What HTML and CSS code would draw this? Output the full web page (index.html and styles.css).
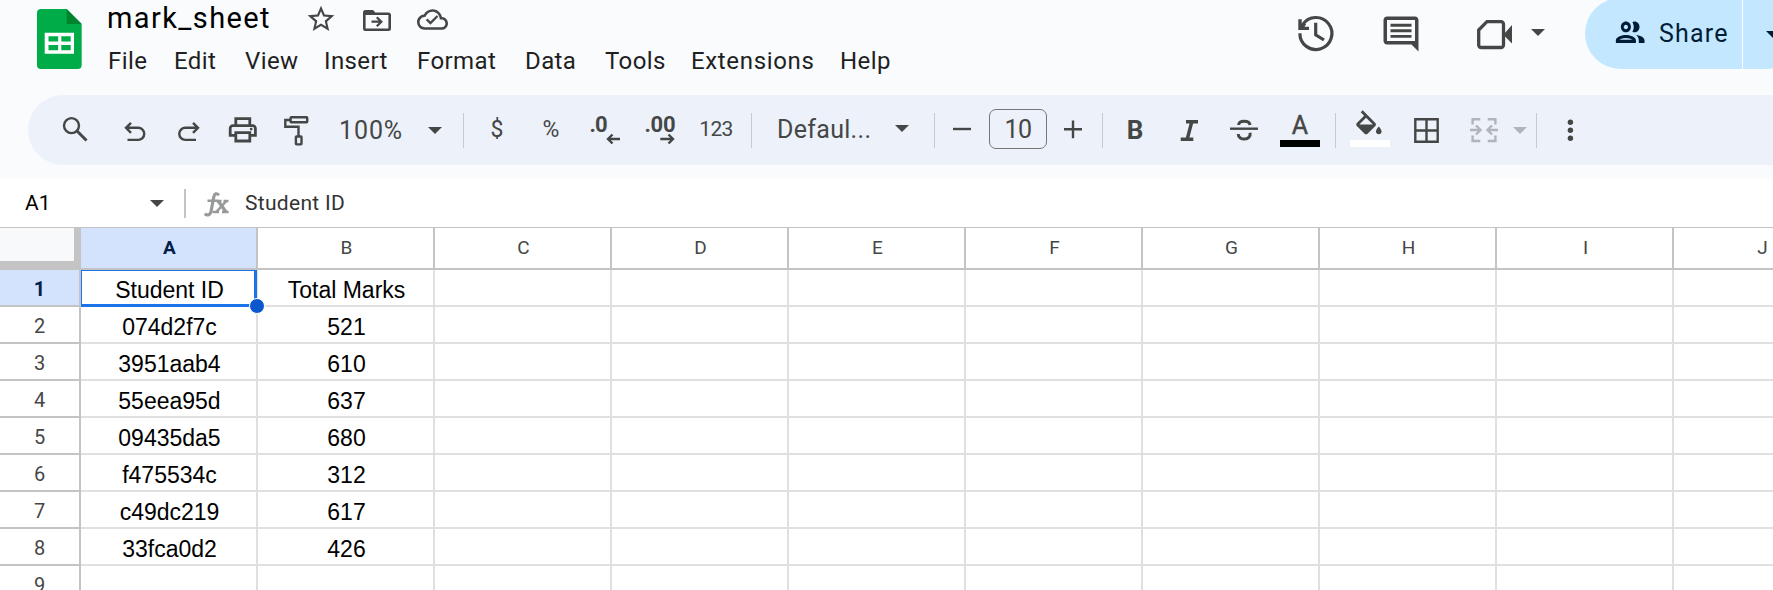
FILE: index.html
```html
<!DOCTYPE html>
<html lang="en">
<head>
<meta charset="utf-8">
<title>mark_sheet</title>
<link rel="stylesheet" href="styles.css">
</head>
<body>
<header class="header">
  <svg class="logo" width="45" height="60" viewBox="0 0 45 60"><path d="M4 0H29.700L44.700 15V56a4 4 0 0 1-4 4H4a4 4 0 0 1-4-4V4a4 4 0 0 1 4-4z" fill="#00ac47"/><path d="M29.700 0L44.700 15H29.700z" fill="#00832d"/><path fill-rule="evenodd" fill="#fff" d="M7.700 23.700H37V44.700H7.700zM11.500 27.200V32.400H21.200V27.200zM24.300 27.200V32.400H33.700V27.200zM11.500 36V41.200H21.200V36zM24.300 36V41.200H33.700V36z"/></svg>
  <div class="doc">
    <div class="doc-top">
      <div class="title">mark_sheet</div>
      <svg class="star" width="32" height="32" viewBox="0 0 24 24"><path d="M22 9.240l-7.190-.62L12 2 9.190 8.630 2 9.240l5.460 4.730L5.820 21 12 17.270 18.180 21l-1.630-7.030L22 9.240zM12 15.400l-3.760 2.270 1-4.280-3.320-2.880 4.380-.38L12 6.100l1.710 4.040 4.380.38-3.320 2.880 1 4.280L12 15.400z"/></svg>
      <svg class="move" width="28" height="22" viewBox="0 0 28 22"><path d="M1.300 2.500V18.500a1.200 1.200 0 0 0 1.200 1.200H25.500a1.200 1.200 0 0 0 1.200-1.200V5a1.200 1.200 0 0 0-1.200-1.200H13" fill="none" stroke="#444746" stroke-width="2.600"/><path d="M2.500 0H10L13 3V5H0V2.500A2.500 2.500 0 0 1 2.500 0z"/><path d="M8.500 11.700H17.500M13.800 7.200L18.300 11.700L13.800 16.200" fill="none" stroke="#444746" stroke-width="2.300"/></svg>
      <svg class="cloud" width="31" height="31" viewBox="0 0 24 24"><path d="M19.350 10.040C18.670 6.590 15.640 4 12 4 9.110 4 6.600 5.640 5.350 8.040 2.340 8.360 0 10.910 0 14c0 3.310 2.690 6 6 6h13c2.760 0 5-2.240 5-5 0-2.640-2.050-4.780-4.650-4.960zM19 18H6c-2.210 0-4-1.790-4-4 0-2.050 1.530-3.760 3.560-3.970l1.070-.11.5-.95C8.080 7.140 9.940 6 12 6c2.620 0 4.880 1.860 5.390 4.430l.3 1.500 1.530.11c1.560.1 2.780 1.410 2.780 2.960 0 1.650-1.350 3-3 3z"/><path d="M7.500 11.900L10.400 14.800L15.900 9.300" fill="none" stroke="#444746" stroke-width="1.800"/></svg>
    </div>
    <nav class="menu">
      <span class="m-file">File</span><span class="m-edit">Edit</span><span class="m-view">View</span><span class="m-insert">Insert</span><span class="m-format">Format</span><span class="m-data">Data</span><span class="m-tools">Tools</span><span class="m-ext">Extensions</span><span class="m-help">Help</span>
    </nav>
  </div>
  <div class="actions">
    <svg class="history" width="40" height="40" viewBox="0 0 40 40"><g fill="none" stroke="#444746" stroke-width="3.200"><path d="M3.900 19.200A16 16 0 1 0 6.600 10.600"/><path d="M19.700 8.800V20.800L28 26"/></g><path d="M2.300 5.300H5.700V10L8 8.500L10 10.500L8.500 12.800H13V16H2.300z"/></svg>
    <svg class="comment" width="42" height="42" viewBox="0 0 24 24"><path d="M21.990 4c0-1.100-.89-2-1.990-2H4c-1.100 0-2 .9-2 2v12c0 1.100.9 2 2 2h14l4 4-.01-18zM20 4v12H4V4h16zM6 12.500h12v1.700H6zm0-3.200h12v1.700H6zm0-3.200h12v1.700H6z"/></svg>
    <svg class="meet" width="36" height="30" viewBox="0 0 36 30"><path d="M10 1.700H24a2.500 2.500 0 0 1 2.500 2.500V25a2.500 2.500 0 0 1-2.500 2.500H4.200A2.500 2.500 0 0 1 1.700 25V10z" fill="none" stroke="#444746" stroke-width="3.300"/><path d="M27 14L35 5V23.500L27 15.500z"/></svg>
    <svg class="meet-arrow" width="14" height="7" viewBox="0 0 14 7"><path d="M0 0H14L7 7z"/></svg>
    <div class="share">
      <svg width="34.400" height="36.500" viewBox="0 0 24 24" preserveAspectRatio="none"><path d="M9 13.750c-2.340 0-7 1.170-7 3.500V19h14v-1.750c0-2.330-4.660-3.500-7-3.500zM4.340 17c.84-.58 2.870-1.250 4.660-1.250s3.820.67 4.660 1.250H4.340zM9 12c1.930 0 3.500-1.570 3.500-3.500S10.930 5 9 5 5.500 6.570 5.500 8.500 7.070 12 9 12zm0-5c.83 0 1.500.67 1.500 1.500S9.830 10 9 10s-1.500-.67-1.500-1.500S8.170 7 9 7zm7.040 6.810c1.160.84 1.960 1.960 1.960 3.440V19h4v-1.750c0-2.020-3.500-3.170-5.960-3.440zM15 12c1.930 0 3.500-1.570 3.500-3.500S16.930 5 15 5c-.54 0-1.040.13-1.500.35.63.89 1 1.980 1 3.150s-.37 2.260-1 3.150c.46.22.96.35 1.500.35z"/></svg>
      <span>Share</span>
    </div>
    <div class="share-more"><svg width="14" height="7" viewBox="0 0 14 7"><path d="M0 0H14L7 7z"/></svg></div>
  </div>
</header>

<div class="toolbar">
  <div class="tb search"><svg viewBox="0 0 36 36"><g class="ln"><circle cx="14.500" cy="13.600" r="7.500"/><path d="M19.800 18.800L29.500 28.500" stroke-width="3"/></g></svg></div>
  <div class="tb undo"><svg viewBox="0 0 36 36"><path class="ln" d="M14 10.800L9 15.800L14 20.800M9 15.800H21.200a6 6 0 0 1 0 12.100H10.500"/></svg></div>
  <div class="tb"><svg viewBox="0 0 36 36"><path class="ln" d="M22 10.800L27 15.800L22 20.800M27 15.800H14.300a6 6 0 0 0 0 12.100H25"/></svg></div>
  <div class="tb"><svg class="print" viewBox="0 0 24 24"><path d="M19 8h-1V3H6v5H5c-1.660 0-3 1.340-3 3v6h4v4h12v-4h4v-6c0-1.660-1.340-3-3-3zM8 5h8v3H8V5zm8 12v2H8v-4h8v2zm2-2v-2H6v2H4v-4c0-.55.45-1 1-1h14c.55 0 1 .45 1 1v4h-2z"/><circle cx="18" cy="11.500" r="1"/></svg></div>
  <div class="tb"><svg viewBox="0 0 36 36"><g class="ln"><rect x="11.600" y="5.300" width="16.600" height="5" rx=".6"/><path d="M11.500 8H6.300V14.800H19.500V24"/><rect x="16.900" y="24.500" width="5.600" height="7.900" rx=".6"/></g></svg></div>
  <div class="zoom">100%</div>
  <div class="arrow"><svg width="14" height="7" viewBox="0 0 14 7"><path d="M0 0H14L7 7z"/></svg></div>
  <div class="sep s1"></div>
  <div class="tb cur">$</div>
  <div class="tb pct">%</div>
  <div class="tb"><svg viewBox="0 0 36 36"><text class="dec" x="2.500" y="20.300" textLength="18">.0</text><path class="ln" d="M33 27H21M25.500 22.500L21 27L25.500 31.500"/></svg></div>
  <div class="tb w56"><svg viewBox="0 0 36 36"><text class="dec" x="2.500" y="20.300" textLength="31">.00</text><path class="ln" d="M18.300 27H31M26.500 22.500L31 27L26.500 31.500"/></svg></div>
  <div class="tb w56 num">123</div>
  <div class="sep s2"></div>
  <div class="font">Defaul...</div>
  <div class="arrow"><svg class="up" width="14" height="7" viewBox="0 0 14 7"><path d="M0 0H14L7 7z"/></svg></div>
  <div class="sep s3"></div>
  <div class="tb"><svg viewBox="0 0 36 36"><path class="ln" d="M9 17H27"/></svg></div>
  <div class="size">10</div>
  <div class="tb w52"><svg viewBox="0 0 36 36"><path class="ln" d="M9 17.300H27M18 8.500V26.200"/></svg></div>
  <div class="sep s4"></div>
  <div class="tb bold">B</div>
  <div class="tb"><svg viewBox="0 0 36 36"><path class="ln thick" d="M15 9.700H27M9.700 27.300H22.300M20.800 9.700L16.200 27.300"/></svg></div>
  <div class="tb w56"><svg viewBox="0 0 36 36"><g class="ln"><path d="M4 16.700H32"/><path stroke-width="3" d="M12.600 13C13 8 23.400 8 24 13M12.200 22C12.200 29 25.500 29 24.100 20.800"/></g></svg></div>
  <div class="tb w56 swatch"><span>A</span><i class="bar black"></i></div>
  <div class="sep s5"></div>
  <div class="tb w56 swatch"><svg viewBox="0 0 36 36"><path transform="translate(0 -1.700) scale(1.410)" d="M16.560 8.940L7.620 0 6.210 1.410l2.380 2.380-5.150 5.150c-.59.59-.59 1.540 0 2.120l5.500 5.500c.29.29.68.44 1.060.44s.77-.15 1.060-.44l5.500-5.500c.59-.58.59-1.530 0-2.120zM5.210 10L10 5.210 14.790 10H5.210zM19 11.500s-2 2.170-2 3.500c0 1.100.9 2 2 2s2-.9 2-2c0-1.330-2-3.500-2-3.500z"/></svg><i class="bar white"></i></div>
  <div class="tb w56"><svg viewBox="0 0 36 36"><path class="ln" d="M7.300 7.300H29.700V29.700H7.300zM18.500 7.300V29.700M7.300 18.500H29.700"/></svg></div>
  <div class="tb merge"><svg viewBox="0 0 36 36"><path class="ln" d="M14.300 7.200H6.600V12.500M21.700 7.200H29.400V12.500M14.300 29H6.600V23.500M21.700 29H29.400V23.500M4 18H14M10 13.500L14.500 18L10 22.500M32 18H22M26 13.500L21.500 18L26 22.500"/></svg></div>
  <div class="arrow dim"><svg width="14" height="7" viewBox="0 0 14 7"><path d="M0 0H14L7 7z"/></svg></div>
  <div class="sep s6"></div>
  <div class="tb"><svg viewBox="0 0 36 36"><circle cx="18.400" cy="10.300" r="2.700"/><circle cx="18.400" cy="18.300" r="2.700"/><circle cx="18.400" cy="26.300" r="2.700"/></svg></div>
</div>

<div class="formula">
  <div class="name">A1</div>
  <svg class="name-arrow" width="14" height="7" viewBox="0 0 14 7"><path d="M0 0H14L7 7z"/></svg>
  <div class="fsep"></div>
  <svg class="fx" width="25" height="25" viewBox="0 0 25 25"><g fill="none" stroke="#979a99"><path stroke-width="3.200" d="M15 3.200C12.500.7 10.500 1.500 9.800 5L7 19.500C6.200 23 3.500 24 .8 21.700"/><path stroke-width="2.600" d="M3.500 8.700H14.500M8.500 20H15M18 20H24.600M13 9H17.500M19.500 9H24.500"/><path stroke-width="3.400" d="M14.200 9L22 20"/><path stroke-width="2.600" d="M22.300 9L12.300 20"/></g></svg>
  <div class="ftext">Student ID</div>
</div>

<main class="sheet">
  <div class="row head"><div class="corner"></div><div class="sel">A</div><div>B</div><div>C</div><div>D</div><div>E</div><div>F</div><div>G</div><div>H</div><div>I</div><div>J</div></div>
  <div class="row"><b class="sel">1</b><div class="active">Student ID<i class="handle"></i></div><div>Total Marks</div><div></div><div></div><div></div><div></div><div></div><div></div><div></div><div></div></div>
  <div class="row"><b>2</b><div>074d2f7c</div><div>521</div><div></div><div></div><div></div><div></div><div></div><div></div><div></div><div></div></div>
  <div class="row"><b>3</b><div>3951aab4</div><div>610</div><div></div><div></div><div></div><div></div><div></div><div></div><div></div><div></div></div>
  <div class="row"><b>4</b><div>55eea95d</div><div>637</div><div></div><div></div><div></div><div></div><div></div><div></div><div></div><div></div></div>
  <div class="row"><b>5</b><div>09435da5</div><div>680</div><div></div><div></div><div></div><div></div><div></div><div></div><div></div><div></div></div>
  <div class="row"><b>6</b><div>f475534c</div><div>312</div><div></div><div></div><div></div><div></div><div></div><div></div><div></div><div></div></div>
  <div class="row"><b>7</b><div>c49dc219</div><div>617</div><div></div><div></div><div></div><div></div><div></div><div></div><div></div><div></div></div>
  <div class="row"><b>8</b><div>33fca0d2</div><div>426</div><div></div><div></div><div></div><div></div><div></div><div></div><div></div><div></div></div>
  <div class="row"><b>9</b><div></div><div></div><div></div><div></div><div></div><div></div><div></div><div></div><div></div><div></div></div>
</main>
</body>
</html>
```
FILE: styles.css
```css
*, *::before { box-sizing: border-box; }
body { margin: 0; width: 1773px; height: 590px; overflow: hidden; background: #f9fbfd; font-family: Roboto, "Open Sans", sans-serif; color: #1f1f1f; }
svg { display: block; flex: none; fill: #444746; overflow: visible; }

.header { display: flex; height: 95px; padding-left: 37px; align-items: flex-start; }
.logo { margin-top: 9px; }
.doc { margin-left: 26px; flex: none; width: 800px; }
.doc-top { display: flex; height: 46px; }
.title { width: 197px; line-height: 36px; font-size: 29px; color: #000; letter-spacing: 1.400px; margin-left: -1px; margin-right: 1px; }
.star { margin-top: 3px; }
.move { margin: 10px 0 0 26px; }
.cloud { margin: 4px 0 0 26px; }
.menu { display: flex; line-height: 30px; font-size: 24px; letter-spacing: .4px; white-space: nowrap; }
.menu span { flex: none; }
.m-file { width: 66px; }
.m-edit { width: 71px; }
.m-view { width: 79px; }
.m-insert { width: 93px; }
.m-format { width: 108px; }
.m-data { width: 80px; }
.m-tools { width: 86px; }
.m-ext { width: 149px; letter-spacing: .65px; }

.actions { display: flex; margin-left: 388px; align-items: flex-start; }
.history { margin-top: 14px; }
.comment { margin: 13px 0 0 44px; }
.meet { margin: 20px 0 0 55px; }
.meet-arrow { margin: 29px 0 0 18px; }
.share { display: flex; align-items: center; flex: none; width: 157px; height: 71px; margin: -2px 0 0 40px; padding-left: 27.500px; border-radius: 36px 0 0 36px; background: #c2e7ff; color: #001d35; font-size: 25px; letter-spacing: 1.200px; }
.share svg { fill: #001d35; margin-bottom: 3px; }
.share span { margin-left: 12px; }
.share-more { flex: none; width: 60px; height: 71px; margin: -2px 0 0 1px; padding: 33px 0 0 22.500px; border-radius: 0 36px 36px 0; background: #c2e7ff; }
.share-more svg { fill: #001d35; }

.toolbar { display: flex; align-items: center; height: 70px; margin-left: 28px; padding-left: 20px; border-radius: 35px 0 0 35px; background: #edf1fa; color: #444746; }
.tb { display: flex; flex: none; width: 54px; height: 70px; align-items: center; justify-content: center; }
.tb svg { width: 36px; height: 36px; }
.tb .print { width: 33.600px; height: 33.600px; }
.undo { margin-left: 6px; }
.ln { fill: none; stroke: #444746; stroke-width: 2.400; }
.thick { stroke-width: 3.400; }
.w56 { width: 56px; }
.w52 { width: 52px; }
.zoom { flex: none; width: 95px; padding: 1px 0 0 15px; font-size: 25px; letter-spacing: .9px; }
.arrow { display: flex; flex: none; width: 31px; justify-content: center; }
.arrow .up { margin-bottom: 3px; }
.sep { flex: none; width: 1px; height: 35px; background: #c7c9cc; }
.s1 { margin: 0 6px 0 13px; }
.s2 { margin-left: 7px; }
.s3 { margin-left: 17px; }
.s4 { margin: 0 5px 0 3px; }
.s5 { margin: 0 6px 0 7px; }
.s6 { margin: 0 6px 0 1px; }
.cur, .pct { font-size: 23px; padding-bottom: 2px; }
.num { font-size: 21px; letter-spacing: -.7px; padding-bottom: 2px; }
.dec { font-size: 22px; font-weight: 700; fill: #444746; }
.font { flex: none; width: 134px; padding: 0 0 1px 25px; font-size: 25px; letter-spacing: .3px; }
.size { display: flex; flex: none; width: 58px; height: 40px; align-items: center; justify-content: center; border: 1px solid #747775; border-radius: 7px; font-size: 25px; letter-spacing: -.5px; margin-bottom: 2px; }
.bold { font-size: 26px; font-weight: 700; padding-bottom: 1px; }
.swatch { position: relative; }
.swatch span { font-size: 25px; line-height: 30px; padding-bottom: 8px; -webkit-text-stroke: .4px #444746; }
.bar { position: absolute; left: 8px; top: 45px; width: 40px; height: 7px; }
.black { background: #000; }
.white { background: #fff; }
.merge { width: 40px; margin-left: 10px; }
.merge .ln { stroke: #b1b4b8; }
.dim svg { fill: #b1b4b8; }

.formula { display: flex; align-items: center; height: 49px; margin-top: 14px; background: #fff; border-bottom: 1px solid #c4c4c4; font-size: 21px; }
.name { width: 150px; padding-left: 25px; color: #000; }
.fsep { width: 2px; height: 29px; margin-left: 20px; background: #c4c4c4; }
.fx { margin: 2px 0 0 18px; }
.ftext { margin-left: 16px; padding-bottom: 1px; color: #333; letter-spacing: .3px; }

.sheet { background: #fff; height: 362px; overflow: hidden; }
.row { display: grid; grid-template-columns: 81px repeat(10, 177px); height: 37px; font: 23px "Liberation Sans", Arial, sans-serif; color: #000; }
.row > * { display: flex; align-items: center; justify-content: center; border-right: 2px solid #e0e0e0; border-bottom: 2px solid #e0e0e0; white-space: nowrap; }
.row > div { padding: 6px 0 0 2px; }
.row > b { font: 20px Roboto, sans-serif; color: #444746; border-color: #c4c4c4; padding-top: 2px; }
.row > b.sel { font-weight: 700; background: #d3e3fd; color: #041e49; }
.row.head { height: 42px; font: 19px Roboto, sans-serif; color: #444746; }
.head > div { border-color: #c4c4c4; padding: 0 0 2px 2px; }
.head > .sel { font-weight: 700; background: #d3e3fd; color: #041e49; }
.head > .corner { background: #f8f9fa; border-right-width: 7px; border-bottom-width: 9px; }
.row > .active { position: relative; }
.active::before { content: ""; position: absolute; left: 0; top: 0; width: 176px; height: 37px; border: solid #1a73e8; border-width: 1px 3px 3px 1px; }
.handle { position: absolute; z-index: 1; left: 168px; top: 28px; width: 16px; height: 16px; border: 1px solid #fff; border-radius: 50%; background: #0b57d0; }
```
